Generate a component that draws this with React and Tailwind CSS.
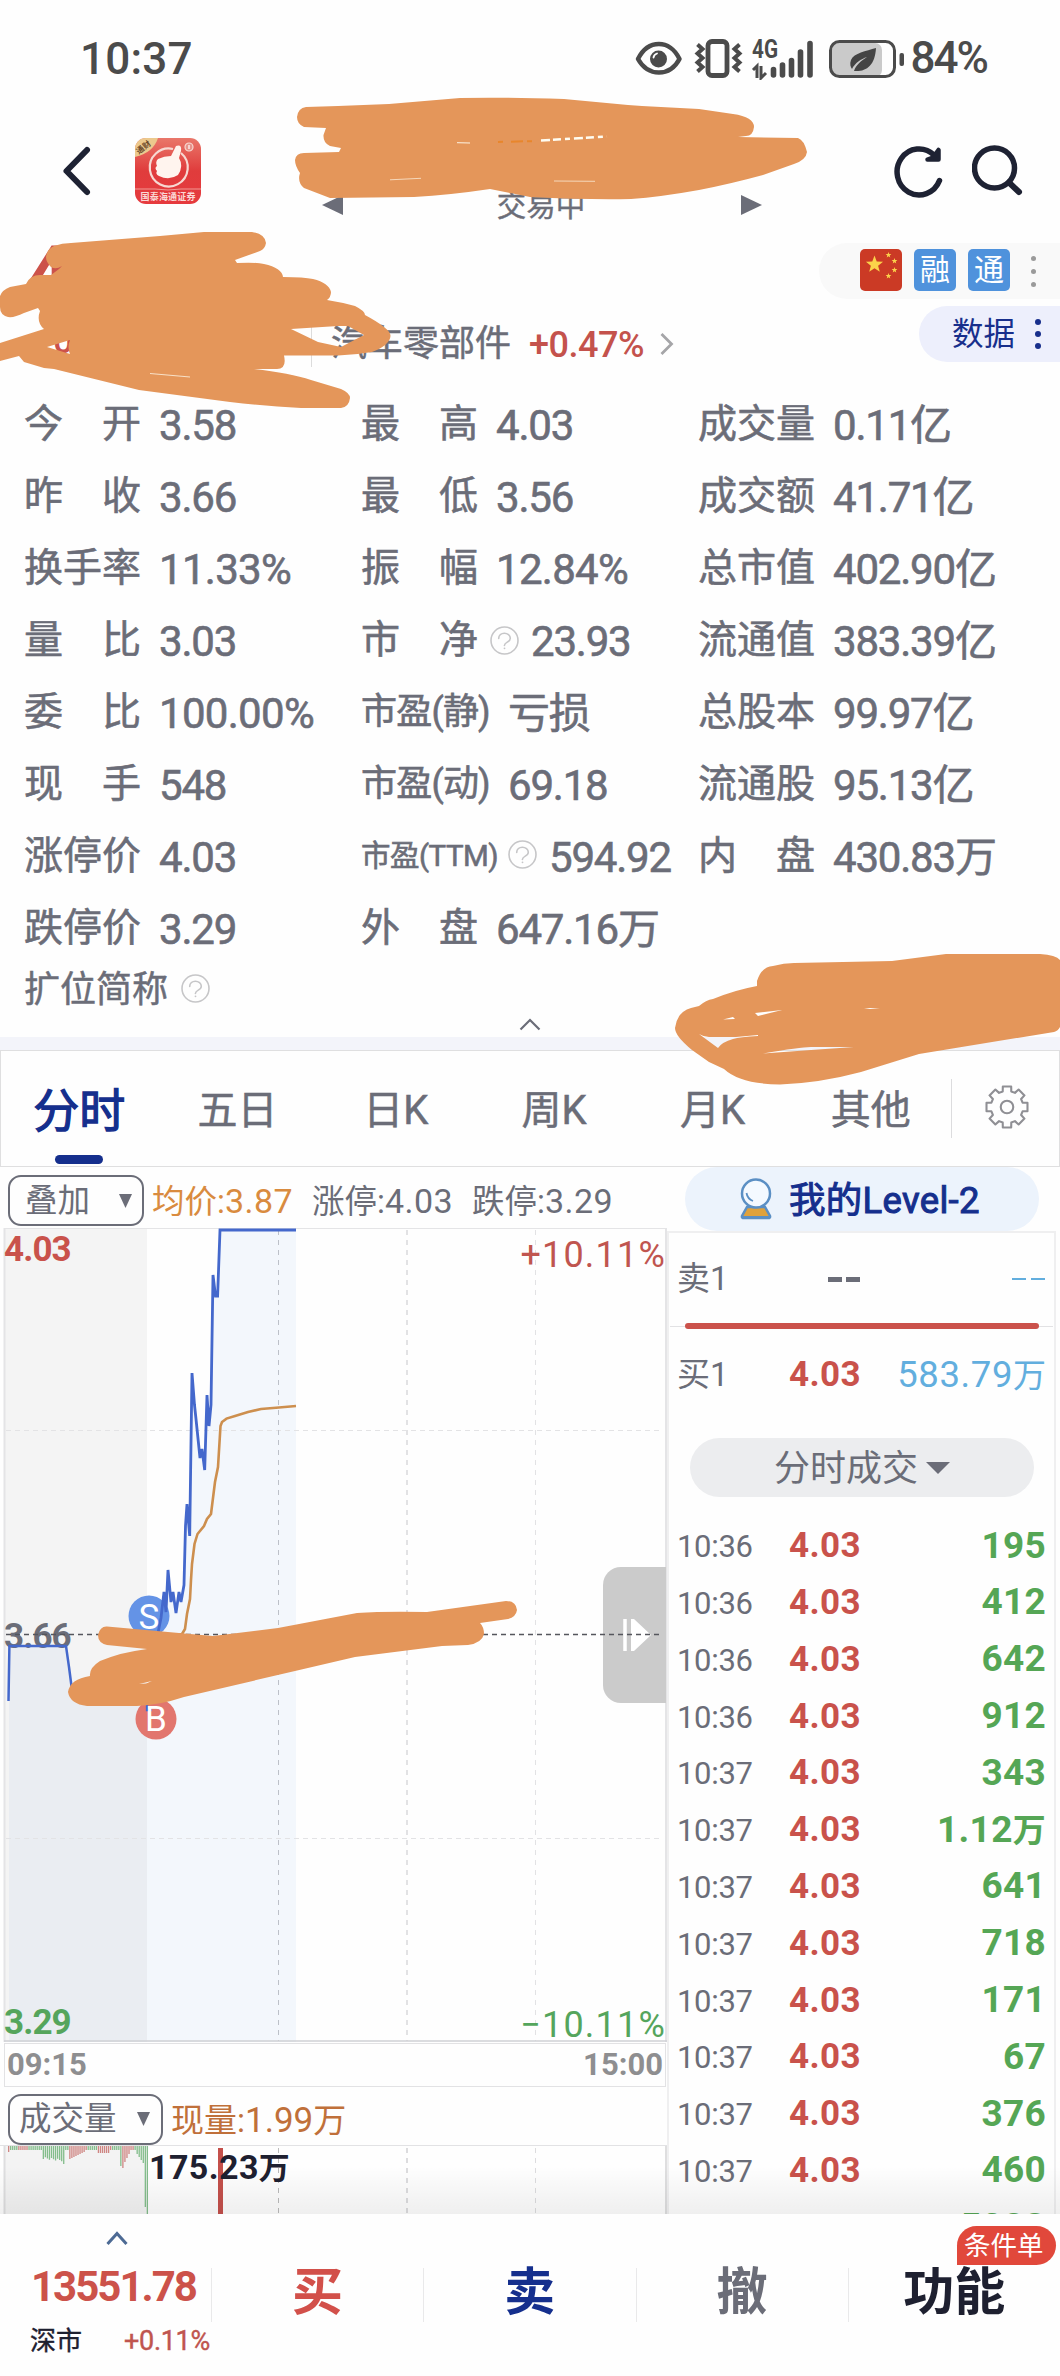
import React from "react";

const stats = [
  [["今开", "3.58"], ["最高", "4.03"], ["成交量", "0.11亿"]],
  [["昨收", "3.66"], ["最低", "3.56"], ["成交额", "41.71亿"]],
  [["换手率", "11.33%"], ["振幅", "12.84%"], ["总市值", "402.90亿"]],
  [["量比", "3.03"], ["市净", "23.93", "help"], ["流通值", "383.39亿"]],
  [["委比", "100.00%"], ["市盈(静)", "亏损"], ["总股本", "99.97亿"]],
  [["现手", "548"], ["市盈(动)", "69.18"], ["流通股", "95.13亿"]],
  [["涨停价", "4.03"], ["市盈(TTM)", "594.92", "help"], ["内盘", "430.83万"]],
  [["跌停价", "3.29"], ["外盘", "647.16万"], null],
];

const tabs = ["分时", "五日", "日K", "周K", "月K", "其他"];

const trades = [
  ["10:36", "195"],
  ["10:36", "412"],
  ["10:36", "642"],
  ["10:36", "912"],
  ["10:37", "343"],
  ["10:37", "1.12万"],
  ["10:37", "641"],
  ["10:37", "718"],
  ["10:37", "171"],
  ["10:37", "67"],
  ["10:37", "376"],
  ["10:37", "460"],
  ["10:37", "5283"],
];

const pricePoints =
  "153,1676 155,1650 158,1633 161,1618 164,1592 166,1612 168,1570 171,1602 173,1592 176,1613 179,1592 181,1602 184,1585 185.5,1526 187,1504 189.7,1536 192,1373 194.5,1405 196,1419 200,1458 202,1449 204.7,1470 207,1395 209,1426 211,1405 213,1275 215.5,1296 217.6,1296 220,1230 296,1230";

const avgPoints =
  "150,1636 178,1635 182,1634 185,1629 187,1614 190,1599 191,1580 192,1564 194.5,1544 197.5,1534 204,1526 207,1519 211,1514 215,1482 218,1467 220.5,1426 222,1422 226.5,1418.6 235,1416 248,1412 261,1409 279,1407.5 296,1406";

// [height, colour] of the pre-market bars, every 2.05px
const preBars = Array.from({ length: 70 }, (_, i) => {
  const red = [0, 5, 6, 7, 8, 9, 30, 31, 32, 33, 34, 35, 36, 37, 38, 44, 45, 46, 47, 48, 49, 50, 56, 57, 58, 59, 60, 61];
  let h = 4;
  if (i > 16 && i < 27) h = 11 + (i % 3) + (i - 17) / 4;
  if (i === 27) h = 18;
  if (i > 29 && i < 38) h = 13 - (i - 30);
  if (i > 43 && i < 50) h = 7;
  if (i > 50 && i < 55) h = 4;
  if (i === 55) h = 20;
  if (i === 56) h = 22;
  if (i > 56 && i < 61) h = 20 - (i - 56) * 4;
  if (i > 62) h = 5 + (i - 62) * 3;
  if (i === 67) h = 61;
  if (i === 68) h = 70;
  if (i > 68) h = 0;
  if (i === 0) h = 6;
  return [h, red.includes(i) ? "#cf8683" : "#83bd8b"];
});

const gearPath = () => {
  const pts = [];
  for (let i = 0; i < 8; i++) {
    const a = (i * Math.PI) / 4 - Math.PI / 2;
    [
      [-0.27, 15.5],
      [-0.2, 20],
      [0.2, 20],
      [0.27, 15.5],
    ].forEach(([d, r]) => {
      pts.push(`${(22 + r * Math.cos(a + d)).toFixed(1)} ${(22 + r * Math.sin(a + d)).toFixed(1)}`);
    });
  }
  return "M" + pts.join("L") + "Z";
};

const Help = ({ className }) => (
  <svg className={`shrink-0 ${className}`} width="29" height="29" viewBox="0 0 29 29" fill="none" stroke="#c6c6c8" strokeWidth="1.6">
    <circle cx="14.5" cy="14.5" r="13.5" />
    <path d="M8.7 12.5c0-3.4 2.6-5.3 5.7-5.3s5.9 2 5.9 5c0 4.2-5.6 3.6-5.9 7.3" strokeLinecap="round" />
    <circle cx="14.5" cy="22.3" r=".9" fill="#c6c6c8" stroke="none" />
  </svg>
);

const Stat = ({ item }) => {
  if (!item) return <div />;
  const [label, value, help] = item;
  const isTtm = label.includes("TTM");
  const isPe = label.includes("(") && !isTtm;
  return (
    <div className="flex items-center h-18 whitespace-nowrap">
      {isTtm || isPe ? (
        <div className={isTtm ? "w-[133px] text-[29.500px] tracking-[-0.500px]" : "w-[129px] text-[36px] tracking-[-0.800px]"}>
          {label}
        </div>
      ) : (
        <div className="w-[117px] flex justify-between text-[39px]">
          {label.split("").map((c) => (
            <span key={c}>{c}</span>
          ))}
        </div>
      )}
      {help && <Help className={isTtm ? "ml-[14px] -mt-1" : "ml-3"} />}
      <div className={`text-[42px] pt-[2px] ${value.includes("%") ? "tracking-[-0.700px]" : "tracking-[-1.200px]"} ${help ? "ml-3" : "ml-[18px]"}`}>
        {value.replace(/[亿万]$|亏损/, "")}
        <span className={value === "亏损" ? "text-[42px]" : "text-[42px]"}>{value.match(/[亿万]$|亏损/)?.[0]}</span>
      </div>
    </div>
  );
};

const StatusBar = () => (
  <div className="h-[116px] flex items-center justify-between pl-[80px] pr-[73px] text-[#4b4b4b] font-medium text-[44px]">
    <span className="tracking-[0.200px] pt-px">10:37</span>
    <div className="flex items-center">
      <svg width="270" height="44" viewBox="0 0 270 44">
        <path d="M3 23C13 3 35 3 44.500 23C35 41 13 41 3 23Z" fill="none" stroke="#4b4b4b" strokeWidth="4.500" strokeLinejoin="round" />
        <circle cx="23.500" cy="23" r="8.500" fill="#4b4b4b" />
        <path d="M18.500 21.500q.5-3 3.500-4" fill="none" stroke="#fff" strokeWidth="1.800" strokeLinecap="round" />
        <g fill="none" stroke="#4b4b4b">
          <rect x="73" y="5.500" width="19" height="34" rx="4" strokeWidth="4.800" />
          <path d="M62.500 8.500l5 4.500l-5 4.500l5 4.500l-5 4.500l5 4.500l-5 4.500" strokeWidth="4" />
          <path d="M104.500 8.500l-5 4.500l5 4.500l-5 4.500l5 4.500l-5 4.500l5 4.500" strokeWidth="4" />
        </g>
        <text x="117" y="21.500" fontSize="25" fontWeight="700" fill="#4b4b4b" textLength="26" lengthAdjust="spacingAndGlyphs">4G</text>
        <path d="M118 34l4-4v12M126 30v12l5-5" fill="none" stroke="#4b4b4b" strokeWidth="3" />
        <g stroke="#4b4b4b" strokeWidth="5.600" strokeLinecap="round">
          <path d="M138.500 33.500v5.500M147.500 29v10M156.500 24.500v14.500M165.500 16v23M175 7.500v31.500" />
        </g>
        <rect x="197" y="7" width="50" height="34" rx="7" fill="#cacaca" />
        <rect x="195.500" y="5.500" width="64" height="35" rx="9" fill="none" stroke="#4b4b4b" strokeWidth="3" />
        <rect x="264.500" y="17" width="4.500" height="13" rx="2" fill="#4b4b4b" />
        <path d="M241 12C231 15 219 17 216 24c-1.500 4-.5 7 1 9c3-6 9-10 15-12c-6 4-11 8-13 14c12 1 21-5 22-23Z" fill="#444" />
      </svg>
      <span className="ml-[6px] tracking-[-2px]">84%</span>
    </div>
  </div>
);

const Header = () => (
  <div className="h-[118px] flex items-start">
    <svg className="ml-[62px] mt-[29px]" width="30" height="52" viewBox="0 0 30 52" fill="none" stroke="#1e2233" strokeWidth="6" strokeLinecap="round" strokeLinejoin="round">
      <path d="M25 5L4.500 26L25 47" />
    </svg>
    <svg className="ml-[43px] mt-[22px]" width="66" height="66" viewBox="0 0 66 66">
      <defs>
        <linearGradient id="logo" x1="0" y1="0" x2="0" y2="1">
          <stop offset="0" stopColor="#e9776a" />
          <stop offset=".5" stopColor="#e03c3c" />
          <stop offset="1" stopColor="#e63a3e" />
        </linearGradient>
        <clipPath id="logoClip">
          <rect width="66" height="66" rx="11" />
        </clipPath>
      </defs>
      <g clipPath="url(#logoClip)">
        <rect width="66" height="66" fill="url(#logo)" />
        <path d="M0 0H23Q18 15 0 19Z" fill="#ecc98d" />
        <text x="3" y="16" fontSize="8" fontWeight="700" fill="#6b4a2a" transform="rotate(-38 4 15)">通财</text>
        <path d="M38 11A19 19 0 1 0 46 15" fill="none" stroke="#f7d9d2" strokeWidth="2.200" />
        <path d="M23 21Q29 18 36 18L41 8Q47 6 46 13L44 20Q49 28 43 37Q34 43 24 38Q20 36 22 33Q19 30 22 28Q20 24 23 21Z" fill="#fff4ee" />
        <circle cx="54" cy="9" r="4" fill="#e8938a" stroke="#f7d9d2" strokeWidth="1.200" />
        <path d="M54 7v4" stroke="#fff" strokeWidth="1.200" />
        <path d="M0 51H20L33 52L46 51H66" stroke="#f09a94" fill="none" />
        <text x="5.500" y="62" fontSize="9" fontWeight="700" fill="#fbd9d6" textLength="55">国泰海通证券</text>
      </g>
    </svg>
    <div className="flex items-center justify-between w-[440px] ml-[121px] mt-[73px] text-[29.500px] leading-[30px] text-[#6b6d78]">
      <svg width="21" height="20" viewBox="0 0 21 20">
        <path d="M0 10L21 0V20Z" fill="#6b6d78" />
      </svg>
      <span className="pt-[2px] pr-[2px] [-webkit-text-stroke:0.4px_#6b6d78]">交易中</span>
      <svg width="21" height="20" viewBox="0 0 21 20">
        <path d="M21 10L0 0V20Z" fill="#6b6d78" />
      </svg>
    </div>
    <svg className="ml-[129px] mt-[27px]" width="54" height="56" viewBox="0 0 54 56" fill="none" stroke="#1e2233" strokeWidth="5.500" strokeLinecap="round" strokeLinejoin="round">
      <path d="M48.500 37.500A22 23 0 1 1 43 12" />
      <path d="M47.500 7V16.500H36.500L42 14.500Z" fill="#1e2233" strokeWidth="4.500" />
    </svg>
    <svg className="ml-[27px] mt-[29px]" width="52" height="52" viewBox="0 0 52 52" fill="none" stroke="#1e2233" strokeWidth="5.500" strokeLinecap="round">
      <circle cx="22.500" cy="23" r="20" />
      <path d="M37 37.500L47 47" strokeWidth="6" />
    </svg>
  </div>
);

const Star = ({ x, y, r }) => {
  const pts = Array.from({ length: 10 }, (_, i) => {
    const a = (i * Math.PI) / 5 - Math.PI / 2;
    const q = i % 2 ? r * 0.42 : r;
    return `${x + q * Math.cos(a)},${y + q * Math.sin(a)}`;
  });
  return <polygon points={pts.join(" ")} fill="#fbd24a" />;
};

const Summary = () => (
  <div className="h-[154px] relative">
    <div className="flex justify-between h-full">
      <div className="pl-[25px] text-[#cc524a] font-bold">
        <div className="text-[82px] leading-[84px]">4.03</div>
        <div className="flex gap-6 text-[36px] leading-[44px] mt-[1px] ml-2 font-medium">
          <span>+0.37</span>
          <span>+10.11%</span>
        </div>
      </div>
      <div className="flex flex-col items-end pt-[9px] gap-[7px]">
        <div className="w-[241px] h-[56px] rounded-l-full bg-[#f9f9f9] flex items-center pl-[41px] gap-3">
          <svg className="-mt-[3px]" width="42" height="42" viewBox="0 0 42 42">
            <rect width="42" height="42" rx="5" fill="#cb3a25" />
            <Star x={14.500} y={15.500} r={9} />
            <Star x={28.500} y={6} r={3} />
            <Star x={34.500} y={12} r={3} />
            <Star x={34.500} y={21} r={3} />
            <Star x={28.500} y={27} r={3} />
          </svg>
          <div className="-mt-[3px] w-[42px] h-[42px] rounded-[5px] bg-[#4f92dc] text-white text-[30px] leading-[42px] text-center">融</div>
          <div className="-mt-[3px] w-[42px] h-[42px] rounded-[5px] bg-[#4f92dc] text-white text-[30px] leading-[42px] text-center">通</div>
          <div className="flex flex-col gap-2 ml-[9px]">
            <i className="w-[5px] h-[5px] rounded-full bg-[#9a9a9a]" />
            <i className="w-[5px] h-[5px] rounded-full bg-[#9a9a9a]" />
            <i className="w-[5px] h-[5px] rounded-full bg-[#9a9a9a]" />
          </div>
        </div>
        <div className="w-[141px] h-[56px] rounded-l-full bg-[#edeffc] flex items-center pl-[33px] text-[31.500px] text-[#182f8c]">
          <span className="pt-px">数据</span>
          <div className="flex flex-col gap-[6px] ml-[20px]">
            <i className="w-[6px] h-[6px] rounded-full bg-[#182f8c]" />
            <i className="w-[6px] h-[6px] rounded-full bg-[#182f8c]" />
            <i className="w-[6px] h-[6px] rounded-full bg-[#182f8c]" />
          </div>
        </div>
      </div>
    </div>
    <div className="absolute left-[311px] top-[91px] h-[42px] border-l border-[#dcdcdc] pl-[19px] flex items-center text-[36px] leading-[36px] whitespace-nowrap">
      <span className="-mt-[5px] [-webkit-text-stroke:0.5px_#6b6d78]">汽车零部件</span>
      <span className="text-[#c4524c] ml-[18px] -mt-[2px] tracking-[-0.500px] font-medium">+0.47%</span>
      <svg className="ml-[16px] -mt-[5px]" width="14" height="22" viewBox="0 0 14 22" fill="none" stroke="#a5a5a8" strokeWidth="2.800">
        <path d="M1.500 1L11.500 11L1.500 21" />
      </svg>
    </div>
  </div>
);

const Tabs = () => (
  <div className="h-[117px] border border-[#dfdfe0] flex items-center">
    {tabs.map((t, i) => (
      <div
        key={t}
        className={`flex-1 h-full flex items-center justify-center relative ${
          i === 0
            ? "text-[46px] text-[#152f8d] [-webkit-text-stroke:1.3px_#152f8d]"
            : "text-[40px] [-webkit-text-stroke:0.5px_#6b6d78]"
        }`}
      >
        <span className="pt-[5px] pr-[2px]">{t}</span>
        {i === 0 && <div className="absolute left-[54px] bottom-[2px] w-12 h-[9px] rounded-full bg-[#152f8d]" />}
      </div>
    ))}
    <div className="w-[108px] h-[59px] border-l border-[#dcdcde] flex items-center justify-center">
      <svg className="ml-1 -mt-[3px]" width="46" height="46" viewBox="0 0 44 44" fill="none" stroke="#8f8f94" strokeWidth="2" strokeLinejoin="round">
        <path d={gearPath()} />
        <circle cx="22" cy="22" r="6" />
      </svg>
    </div>
  </div>
);

const Chart = () => (
  <div className="relative h-[814px]">
    <svg className="absolute left-0 top-0" width="668" height="814" viewBox="0 1228 668 814">
      <rect x="5" y="1229" width="142" height="813" fill="#f4f4f4" />
      <polygon points="9,2042 9,1646 66,1646 69,1667 72,1690 147,1700 147,2042" fill="#eaedf2" />
      <polygon points={`147,2042 147,1690 ${pricePoints} 296,2042`} fill="#f3f7fc" />
      <g stroke="#e3e3e5" strokeDasharray="5 4" fill="none">
        <path d="M6 1430.500H663M6 1838.500H663" />
      </g>
      <path d="M407 1230V2041" stroke="#e2e2e4" strokeWidth="2" strokeDasharray="5 5" />
      <path d="M535.500 1230V2041" stroke="#e2e2e4" strokeDasharray="5 5" />
      <path d="M278.500 1230V2041" stroke="#bcc0c8" strokeDasharray="5 5" />
      <path d="M4.500 2042V1228H666V2042" fill="none" stroke="#e4e4e6" strokeWidth="2" />
      <path d="M4 2041H667" stroke="#cfd1d4" strokeWidth="1.500" />
      <path d="M666 1567H621a18 18 0 0 0-18 18V1685a18 18 0 0 0 18 18H666Z" fill="#cbcbcb" />
      <path d="M625 1619v32" stroke="#fff" strokeWidth="3.500" />
      <path d="M631 1619h3l17 16l-17 16h-3Z" fill="#fff" />
    </svg>
    <div className="absolute left-[4px] top-[4px] text-[35px] leading-[35px] font-bold tracking-[-0.900px] text-[#c9524b]">4.03</div>
    <div className="absolute left-[4px] top-[391px] text-[35px] leading-[35px] font-bold tracking-[-0.900px]">3.66</div>
    <div className="absolute left-[4px] top-[777px] text-[35px] leading-[35px] font-bold tracking-[-0.900px] text-[#55a55c]">3.29</div>
    <div className="absolute right-[1px] top-[9px] text-[36px] leading-[36px] tracking-[1.200px] text-[#c0554f]">+10.11%</div>
    <div className="absolute right-[1px] top-[779px] text-[36px] leading-[36px] tracking-[1.200px] text-[#55a55c]">−10.11%</div>
    <svg className="absolute left-0 top-0" width="668" height="814" viewBox="0 1228 668 814" fill="none">
      <path d="M6 1634.500H663" stroke="#55565c" strokeWidth="1.300" strokeDasharray="5 4" />
      <circle cx="149" cy="1616" r="20.500" fill="#6493e6" />
      <circle cx="156" cy="1719" r="20.500" fill="#e2766e" />
      <polyline points="8.500,1701 9.400,1646 66,1646 69,1667 72,1690" stroke="#4468cc" strokeWidth="2.500" />
      <path d="M147 1700v10h5" stroke="#4468cc" strokeWidth="2.300" />
      <polyline points={pricePoints} stroke="#4468cc" strokeWidth="2.800" />
      <polyline points={avgPoints} stroke="#cd8f4e" strokeWidth="2.600" />
    </svg>
    <div className="absolute left-[129px] top-[370px] w-10 text-center text-[35px] leading-[40px] text-white">S</div>
    <div className="absolute left-[136px] top-[472px] w-10 text-center text-[35px] leading-[40px] text-white">B</div>
  </div>
);

const Volume = () => (
  <div className="relative h-[69px] border-t border-[#e2e2e4]">
    <svg className="absolute left-0 top-0" width="668" height="69" viewBox="0 0 668 69">
      <rect x="4" width="143" height="69" fill="#f3f3f3" />
      <path d="M4.500 0V69M666 0V69" stroke="#dededf" strokeWidth="2" />
      {preBars.map(([h, color], i) => (
        <rect key={i} x={8 + i * 2.040} y="0" width="1.300" height={h} fill={color} />
      ))}
      <rect x="218" y="2" width="5" height="67" fill="#c4504b" />
      <path d="M278.500 2V69" stroke="#bbb" strokeDasharray="5 5" />
      <path d="M407 2V69" stroke="#dcdcde" strokeWidth="2" strokeDasharray="5 5" />
      <path d="M535.500 2V69" stroke="#dcdcde" strokeDasharray="5 5" />
    </svg>
    <div className="absolute left-[149px] top-[2px] text-[34px] leading-[38px] font-bold text-[#1e2030] tracking-[0.400px] whitespace-nowrap">
      175.23<span className="text-[31px]">万</span>
    </div>
  </div>
);

const Select = ({ children, className }) => (
  <div className={`h-[51px] border-2 border-[#6b6d78] rounded-[13px] flex items-center justify-between text-[32.500px] leading-none ${className}`}>
    <span className="pt-px">{children}</span>
    <svg width="13" height="14" viewBox="0 0 13 14">
      <path d="M0 0H13L6.500 14Z" fill="#6b6d78" />
    </svg>
  </div>
);

const LeftPanel = () => (
  <div className="w-[667px] shrink-0">
    <div className="h-[61px] flex items-center pl-2 pt-[6px] text-[32.500px] whitespace-nowrap leading-none">
      <Select className="w-[136px] pl-[15px] pr-[10px]">叠加</Select>
      <span className="ml-[8px] pt-[2px] w-[160px] text-[#d98b3f]">均价:<span className="text-[34px] tracking-[0.500px]">3.87</span></span>
      <span className="w-[160px] pt-[2px]">涨停:<span className="text-[34px] tracking-[0.500px]">4.03</span></span>
      <span className="pt-[2px]">跌停:<span className="text-[34px] tracking-[0.500px]">3.29</span></span>
    </div>
    <Chart />
    <div className="h-[44px] ml-1 mr-[1px] mt-[1px] border border-[#e2e2e4] flex items-center justify-between px-[2px] text-[31px] font-bold text-[#8e8e90]">
      <span>09:15</span>
      <span>15:00</span>
    </div>
    <div className="h-[58px] flex items-center pl-2 pt-[6px] text-[33px] leading-none">
      <Select className="w-[155px] pl-[9px] pr-[11px]">成交量</Select>
      <span className="ml-[8px] pt-[2px] text-[#c0703a]">现量:<span className="text-[35px]">1.99</span>万</span>
    </div>
    <Volume />
  </div>
);

const RightPanel = () => (
  <div className="flex-1">
    <div className="ml-[18px] w-[354px] h-16 rounded-full bg-[#ecf3fc] flex items-center pl-[55px] text-[36.500px] text-[#152f8d] whitespace-nowrap">
      <svg width="32" height="42" viewBox="0 0 32 42" fill="none" stroke="#5b8fc4" strokeWidth="2.500">
        <path d="M7 29h18l5 9q.5 2-2 2h-24q-2.500 0-2-2Z" fill="#e0a23c" />
        <path d="M2 39.500h28" strokeWidth="3" />
        <circle cx="16" cy="15.500" r="14" fill="#f4f9ff" />
        <path d="M6.500 15q1 6 6.500 8" strokeWidth="1.800" />
      </svg>
      <span className="ml-[17px] pt-[4px] tracking-[0.300px] [-webkit-text-stroke:1px_#152f8d]">我的Level-2</span>
    </div>
    <div className="w-[389px] h-[984px] border-2 border-[#efeff0] border-b-0 ml-0 overflow-hidden text-[33px]">
      <div className="h-[92px] flex items-center pl-[8px] pr-[9px]">
        <span>卖1</span>
        <div className="flex gap-1 ml-[99px]">
          <i className="w-[14px] h-[5px] bg-[#6b6d78]" />
          <i className="w-[14px] h-[5px] bg-[#6b6d78]" />
        </div>
        <div className="flex gap-[5px] ml-auto">
          <i className="w-[14px] h-[2px] bg-[#62aede]" />
          <i className="w-[14px] h-[2px] bg-[#62aede]" />
        </div>
      </div>
      <div className="flex items-center h-[6px] mx-[1px] -mt-[2px]">
        <i className="h-px w-[15px] bg-[#e2e2e4]" />
        <i className="h-[6px] w-[354px] rounded-full bg-[#cb524b]" />
        <i className="h-px flex-1 bg-[#e2e2e4]" />
      </div>
      <div className="h-[92px] flex items-center pl-[8px] pr-[8px]">
        <span className="w-[112px]">买1</span>
        <span className="text-[35px] font-bold text-[#c9524b] tracking-[0.400px]">4.03</span>
        <span className="ml-auto text-[36.500px] text-[#62aede] tracking-[0.600px]">583.79<span className="text-[33px] tracking-normal">万</span></span>
      </div>
      <div className="mt-[17px] ml-[21px] w-[344px] h-[59px] rounded-full bg-[#ecedef] flex items-center pl-[84px] text-[36px]">
        <span className="pt-[2px]">分时成交</span>
        <svg className="ml-[8px]" width="24" height="12" viewBox="0 0 24 12">
          <path d="M0 0H24L12 12Z" fill="#6b6d78" />
        </svg>
      </div>
      <div className="mt-[20px]">
        {trades.map(([time, qty], i) => (
          <div key={i} className="h-[56.800px] flex items-center pl-[8px] pr-[8px]">
            <span className="w-[112px] text-[31px] pt-[4px] tracking-[-0.300px]">{time}</span>
            <span className="text-[35px] font-bold text-[#c9524b] pt-[2px] tracking-[0.400px]">4.03</span>
            <span className="ml-auto text-[37px] font-bold text-[#55a655] tracking-[0.300px]">
              {qty.replace("万", "")}
              {qty.includes("万") && <span className="text-[33px]">万</span>}
            </span>
          </div>
        ))}
      </div>
    </div>
  </div>
);

const BottomBar = () => (
  <div className="h-[162px] bg-[#fefefe] flex text-[51px] font-bold relative">
    <div className="w-[211px] relative">
      <svg className="ml-[106px] mt-[16px]" width="22" height="16" viewBox="0 0 22 16" fill="none" stroke="#4d6a94" strokeWidth="3">
        <path d="M1.500 14L11 3.500L20.500 14" />
      </svg>
      <div className="ml-[31px] mt-[16px] text-[42px] leading-[50px] tracking-[-2px] text-[#cc524a]">13551.78</div>
      <div className="flex items-center ml-[30px] mt-[14px] text-[26px] leading-[30px] font-normal text-[#1e2030] [-webkit-text-stroke:0.4px]">
        深市
        <span className="ml-[42px] text-[27px] text-[#c0554f] tracking-[-0.300px]">+0.11%</span>
      </div>
    </div>
    {[
      ["买", "text-[#d2504a]"],
      ["卖", "text-[#152f8d]"],
      ["撤", "text-[#6b6d78]"],
      ["功能", "text-[#1e2030]"],
    ].map(([name, color]) => (
      <div key={name} className="flex-1 pt-[54px]">
        <div className={`h-[54px] leading-[50px] border-l border-[#e9e9ea] text-center ${color}`}>{name}</div>
      </div>
    ))}
    <div className="absolute right-1 top-3 w-[99px] h-[39px] rounded-[20px] rounded-bl-none bg-[#e1483b] text-white text-[26.500px] leading-[39px] font-normal pl-[7px]">
      条件单
    </div>
  </div>
);

// marker strokes painted over the page
const Marker = () => (
  <svg className="absolute left-0 top-0 pointer-events-none" width="1060" height="2376" viewBox="0 0 1060 2376" fill="#e4965a" fillRule="evenodd">
    <path d="M306 107L338 106L389 104L460 98Q500 97 564 99L628 105L642 106L699 109L733 114Q754 117 754 127Q753 136 746 136L738 137L798 138Q804 140 807 152Q806 160 794 164L763 175Q730 184 699 190Q660 197 631 199Q590 200 530 197L490 189Q450 195 414 197L330 198L304 188Q297 182 300 173Q295 166 295 160Q296 153 304 153L339 152L341 148L330 146Q323 143 323.500 135L326 128L304 127Q297 124 297 117Q298 108 306 107Z" />
    <path d="M54 246Q62 243 71 243L160 236L204 232H252Q265 234 266 243Q265 249 260 251L235 260L237 263Q256 262 264 264Q282 268 283 277Q304 277 313 279Q329 283 331 292Q331 297 327 300Q340 302 355 306Q365 311 365 315Q391 329 390.500 336Q390 345 372 352Q355 355 338 355.500H284Q287 369 277 369H254Q290 373 311 380L341 389Q350 393 350 398Q349 407 341 408H301Q265 406 230 402L139 390L54 369L44 368L24 362L19 356L0 361V343L44 329Q36 322 40 311L38 308L24 313Q14 318 8 317Q0 315 0 307V296Q2 290 10 287L26 284Q30 275 40 275H51L59 269L62 266Q56 270 51 267Q46 262 46 257Q47 249 54 246ZM291 329L338 326H348L364 335L341 347L318 342ZM47 347L70 340Q67 347 70 354Z" />
    <path d="M757 986V981Q761 967 773 966Q784 963 794 963L892 961L946 954H1040Q1056 955 1060 960V1027Q1058 1031 1054 1032L919 1054L861 1072Q820 1083 780 1084.500Q740 1084 724 1069L709 1062L692 1050Q675 1036 675 1028Q677 1012 691 1008L699 1006Q706 1000 713 999Q735 990 757 986ZM699 1034Q704 1037 709 1037H736L758 1035L758 1036Q740 1037 733 1039Q722 1042 718 1048ZM755 1013L782 1010L758 1016ZM763 1053.500Q800 1047 811 1047H854L811 1050ZM723 1019.500L733 1017L735 1019ZM864 1009L870 1008L880 1009Z" />
    <path d="M107 1626.500L179 1633L213 1636L278 1628L357 1613Q385 1611 427 1612L506 1601Q516 1601 517 1610Q516 1617 508 1619L480 1623Q484 1627 484 1634Q482 1643 468 1645L442 1646L355 1657L295 1671L184 1697Q160 1705 137 1706H87Q70 1704 68 1692Q70 1679 90 1676Q89 1668 100 1661Q122 1652 147 1649L107 1645Q98 1643 98 1635Q100 1626 107 1626.500ZM139 1684L152 1681L146 1683.500Z" />
    <g stroke="#fffdf2" fill="none">
      <path d="M541 140.500L607 136.500" strokeWidth="2.600" strokeDasharray="9 3 8 4 5 4" />
      <path d="M457 142.700L470 143" strokeWidth="0.900" />
      <path d="M498 142L537 141" stroke="#e8862c" strokeWidth="2" strokeDasharray="5 8 12 4" />
      <path d="M390 179.800L421 178.300M554 181L595 181.300" strokeWidth="0.800" opacity="0.800" />
      <path d="M150 373.500L190 377" strokeWidth="0.900" opacity="0.800" />
    </g>
  </svg>
);

export default function App() {
  return (
    <div className="relative w-[1060px] h-[2376px] overflow-hidden bg-[#fefefe] text-[#6b6d78] font-['Roboto','Noto_Sans_CJK_SC',sans-serif]">
      <StatusBar />
      <Header />
      <Summary />
      <div className="grid grid-cols-[337px_337px_1fr] pl-6 [-webkit-text-stroke:0.6px_#6b6d78]">
        {stats.flat().map((item, i) => (
          <Stat key={i} item={item} />
        ))}
      </div>
      <div className="h-[49px] flex items-center pl-6 text-[36px]">
        <span className="pt-[2px] [-webkit-text-stroke:0.5px_#6b6d78]">扩位简称</span>
        <Help className="ml-[13px]" />
      </div>
      <div className="h-6 flex justify-center pt-1">
        <svg width="22" height="14" viewBox="0 0 22 14" fill="none" stroke="#6b6d78" strokeWidth="2.200">
          <path d="M1.500 12.500L11 3L20.500 12.500" />
        </svg>
      </div>
      <div className="h-[13px] bg-[#f3f4fa]" />
      <Tabs />
      <div className="flex h-[1047px] relative">
        <LeftPanel />
        <RightPanel />
        <div className="absolute left-0 bottom-0 w-full h-[48px] bg-linear-to-b from-black/0 to-black/6" />
      </div>
      <BottomBar />
      <Marker />
    </div>
  );
}
